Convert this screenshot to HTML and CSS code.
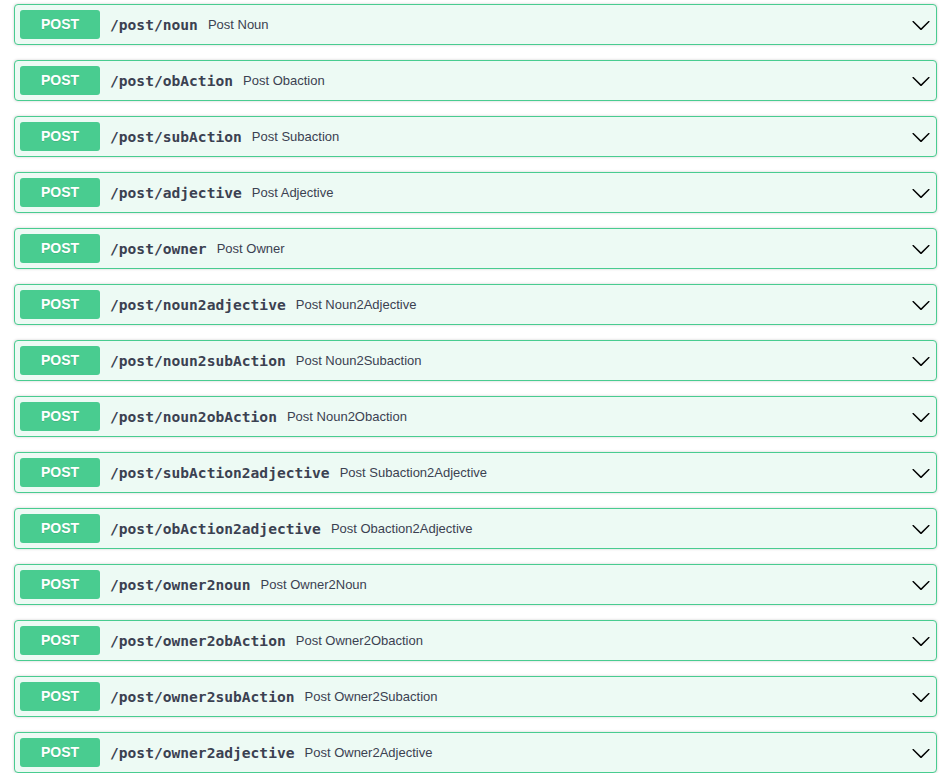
FILE: index.html
```html
<!DOCTYPE html>
<html>
<head>
<meta charset="utf-8">
<link rel="stylesheet" href="styles.css">
</head>
<body>
<div class="ops">
  <div class="opblock"><span class="method">POST</span><span class="path">/post/noun</span><span class="desc">Post Noun</span><svg class="arrow" viewBox="0 0 20 20"><path d="M17.418 6.109c.272-.268.709-.268.979 0s.271.701 0 .969l-7.908 7.83c-.27.268-.707.268-.979 0l-7.908-7.83c-.27-.268-.27-.701 0-.969.271-.268.709-.268.979 0L10 13.250l7.418-7.141z"/></svg></div>
  <div class="opblock"><span class="method">POST</span><span class="path">/post/obAction</span><span class="desc">Post Obaction</span><svg class="arrow" viewBox="0 0 20 20"><path d="M17.418 6.109c.272-.268.709-.268.979 0s.271.701 0 .969l-7.908 7.83c-.27.268-.707.268-.979 0l-7.908-7.83c-.27-.268-.27-.701 0-.969.271-.268.709-.268.979 0L10 13.25l7.418-7.141z"/></svg></div>
  <div class="opblock"><span class="method">POST</span><span class="path">/post/subAction</span><span class="desc">Post Subaction</span><svg class="arrow" viewBox="0 0 20 20"><path d="M17.418 6.109c.272-.268.709-.268.979 0s.271.701 0 .969l-7.908 7.83c-.27.268-.707.268-.979 0l-7.908-7.83c-.27-.268-.27-.701 0-.969.271-.268.709-.268.979 0L10 13.25l7.418-7.141z"/></svg></div>
  <div class="opblock"><span class="method">POST</span><span class="path">/post/adjective</span><span class="desc">Post Adjective</span><svg class="arrow" viewBox="0 0 20 20"><path d="M17.418 6.109c.272-.268.709-.268.979 0s.271.701 0 .969l-7.908 7.83c-.27.268-.707.268-.979 0l-7.908-7.83c-.27-.268-.27-.701 0-.969.271-.268.709-.268.979 0L10 13.25l7.418-7.141z"/></svg></div>
  <div class="opblock"><span class="method">POST</span><span class="path">/post/owner</span><span class="desc">Post Owner</span><svg class="arrow" viewBox="0 0 20 20"><path d="M17.418 6.109c.272-.268.709-.268.979 0s.271.701 0 .969l-7.908 7.83c-.27.268-.707.268-.979 0l-7.908-7.83c-.27-.268-.27-.701 0-.969.271-.268.709-.268.979 0L10 13.25l7.418-7.141z"/></svg></div>
  <div class="opblock"><span class="method">POST</span><span class="path">/post/noun2adjective</span><span class="desc">Post Noun2Adjective</span><svg class="arrow" viewBox="0 0 20 20"><path d="M17.418 6.109c.272-.268.709-.268.979 0s.271.701 0 .969l-7.908 7.83c-.27.268-.707.268-.979 0l-7.908-7.83c-.27-.268-.27-.701 0-.969.271-.268.709-.268.979 0L10 13.25l7.418-7.141z"/></svg></div>
  <div class="opblock"><span class="method">POST</span><span class="path">/post/noun2subAction</span><span class="desc">Post Noun2Subaction</span><svg class="arrow" viewBox="0 0 20 20"><path d="M17.418 6.109c.272-.268.709-.268.979 0s.271.701 0 .969l-7.908 7.83c-.27.268-.707.268-.979 0l-7.908-7.83c-.27-.268-.27-.701 0-.969.271-.268.709-.268.979 0L10 13.25l7.418-7.141z"/></svg></div>
  <div class="opblock"><span class="method">POST</span><span class="path">/post/noun2obAction</span><span class="desc">Post Noun2Obaction</span><svg class="arrow" viewBox="0 0 20 20"><path d="M17.418 6.109c.272-.268.709-.268.979 0s.271.701 0 .969l-7.908 7.83c-.27.268-.707.268-.979 0l-7.908-7.83c-.27-.268-.27-.701 0-.969.271-.268.709-.268.979 0L10 13.25l7.418-7.141z"/></svg></div>
  <div class="opblock"><span class="method">POST</span><span class="path">/post/subAction2adjective</span><span class="desc">Post Subaction2Adjective</span><svg class="arrow" viewBox="0 0 20 20"><path d="M17.418 6.109c.272-.268.709-.268.979 0s.271.701 0 .969l-7.908 7.83c-.27.268-.707.268-.979 0l-7.908-7.83c-.27-.268-.27-.701 0-.969.271-.268.709-.268.979 0L10 13.25l7.418-7.141z"/></svg></div>
  <div class="opblock"><span class="method">POST</span><span class="path">/post/obAction2adjective</span><span class="desc">Post Obaction2Adjective</span><svg class="arrow" viewBox="0 0 20 20"><path d="M17.418 6.109c.272-.268.709-.268.979 0s.271.701 0 .969l-7.908 7.83c-.27.268-.707.268-.979 0l-7.908-7.83c-.27-.268-.27-.701 0-.969.271-.268.709-.268.979 0L10 13.25l7.418-7.141z"/></svg></div>
  <div class="opblock"><span class="method">POST</span><span class="path">/post/owner2noun</span><span class="desc">Post Owner2Noun</span><svg class="arrow" viewBox="0 0 20 20"><path d="M17.418 6.109c.272-.268.709-.268.979 0s.271.701 0 .969l-7.908 7.83c-.27.268-.707.268-.979 0l-7.908-7.83c-.27-.268-.27-.701 0-.969.271-.268.709-.268.979 0L10 13.25l7.418-7.141z"/></svg></div>
  <div class="opblock"><span class="method">POST</span><span class="path">/post/owner2obAction</span><span class="desc">Post Owner2Obaction</span><svg class="arrow" viewBox="0 0 20 20"><path d="M17.418 6.109c.272-.268.709-.268.979 0s.271.701 0 .969l-7.908 7.83c-.27.268-.707.268-.979 0l-7.908-7.83c-.27-.268-.27-.701 0-.969.271-.268.709-.268.979 0L10 13.25l7.418-7.141z"/></svg></div>
  <div class="opblock"><span class="method">POST</span><span class="path">/post/owner2subAction</span><span class="desc">Post Owner2Subaction</span><svg class="arrow" viewBox="0 0 20 20"><path d="M17.418 6.109c.272-.268.709-.268.979 0s.271.701 0 .969l-7.908 7.83c-.27.268-.707.268-.979 0l-7.908-7.83c-.27-.268-.27-.701 0-.969.271-.268.709-.268.979 0L10 13.25l7.418-7.141z"/></svg></div>
  <div class="opblock"><span class="method">POST</span><span class="path">/post/owner2adjective</span><span class="desc">Post Owner2Adjective</span><svg class="arrow" viewBox="0 0 20 20"><path d="M17.418 6.109c.272-.268.709-.268.979 0s.271.701 0 .969l-7.908 7.83c-.27.268-.707.268-.979 0l-7.908-7.83c-.27-.268-.27-.701 0-.969.271-.268.709-.268.979 0L10 13.25l7.418-7.141z"/></svg></div>
</div>
</body>
</html>
```
FILE: styles.css
```css
html, body {
  margin: 0;
  padding: 0;
  background: #fff;
}
.ops {
  padding: 4px 15px 0 14px;
  display: flex;
  flex-direction: column;
  gap: 15px;
}
.opblock {
  display: flex;
  align-items: center;
  height: 41px;
  box-sizing: border-box;
  padding: 5px;
  border: 1px solid #49cc90;
  border-radius: 4px;
  background: #edfaf4;
  box-shadow: 0 0 3px rgba(0,0,0,.19);
}
.method {
  width: 80px;
  height: 29px;
  box-sizing: border-box;
  padding-bottom: 2px;
  flex: none;
  display: flex;
  align-items: center;
  justify-content: center;
  background: #49cc90;
  border-radius: 3px;
  color: #fff;
  font-family: "Liberation Sans", Arial, sans-serif;
  font-weight: 700;
  font-size: 14px;
  text-shadow: 0 1px 0 rgba(0,0,0,.1);
}
.path {
  padding: 0 10px;
  font-family: "DejaVu Sans Mono", monospace;
  font-weight: 700;
  font-size: 14.6px;
  color: #3b4151;
}
.desc {
  flex: 1;
  font-family: "Liberation Sans", Arial, sans-serif;
  font-size: 13px;
  color: #3b4151;
}
.arrow {
  width: 20px;
  height: 20px;
  flex: none;
  fill: #000;
}
```
